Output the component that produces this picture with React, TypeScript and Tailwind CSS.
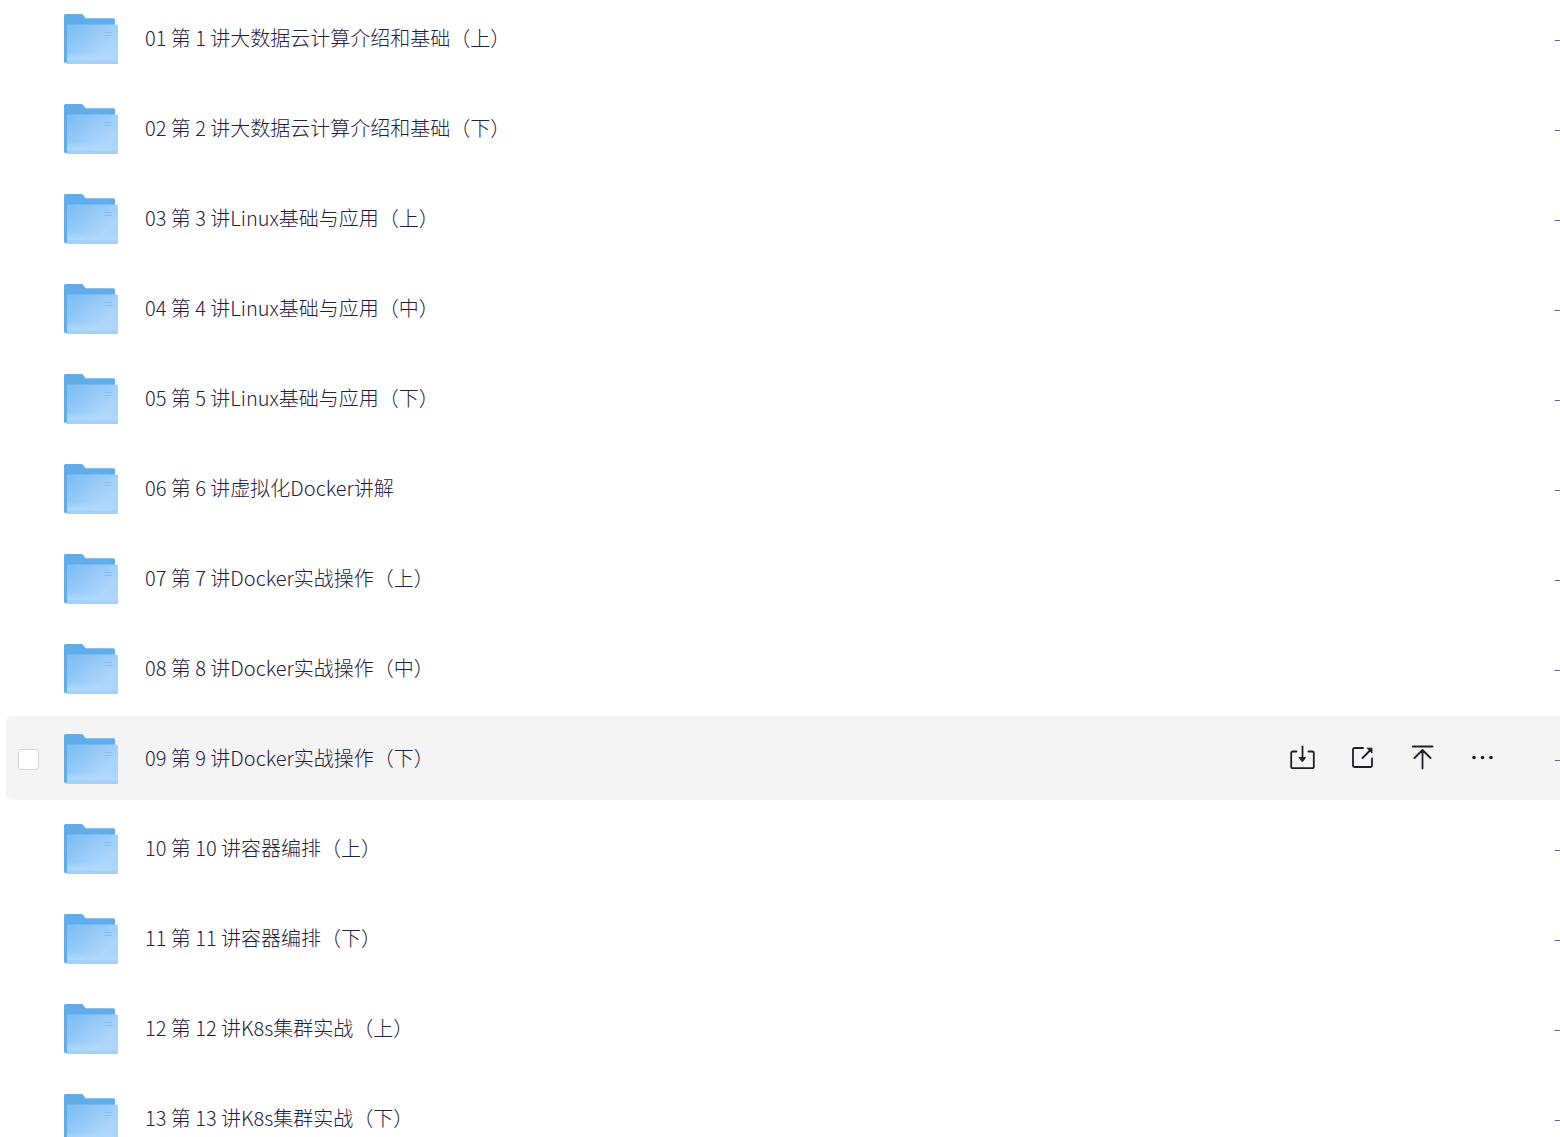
import { ReactNode } from "react";

const lessons = [
  "01 第 1 讲大数据云计算介绍和基础（上）",
  "02 第 2 讲大数据云计算介绍和基础（下）",
  "03 第 3 讲Linux基础与应用（上）",
  "04 第 4 讲Linux基础与应用（中）",
  "05 第 5 讲Linux基础与应用（下）",
  "06 第 6 讲虚拟化Docker讲解",
  "07 第 7 讲Docker实战操作（上）",
  "08 第 8 讲Docker实战操作（中）",
  "09 第 9 讲Docker实战操作（下）",
  "10 第 10 讲容器编排（上）",
  "11 第 11 讲容器编排（下）",
  "12 第 12 讲K8s集群实战（上）",
  "13 第 13 讲K8s集群实战（下）",
];

const activeIndex = 8;

const FolderIcon = () => (
  <svg className="h-[50px] w-[54px] shrink-0" viewBox="0 0 54 50" aria-hidden="true">
    <path
      d="M1.5 0H17.2c.8 0 1.5.3 2 1L21.6 4.3H49.5A1.5 1.5 0 0 1 51 5.8V49H1.5A1.5 1.5 0 0 1 0 47.5V1.5A1.5 1.5 0 0 1 1.5 0Z"
      fill="#61adeb"
    />
    <path
      d="M4 10.5H52.5A1.5 1.5 0 0 1 54 12V48.5A1.5 1.5 0 0 1 52.5 50H2.5C3 49.5 3 49 3 48.5V11.5A1 1 0 0 1 4 10.5Z"
      fill="url(#folderFront)"
    />
    <path d="M3 38H54V46.5H3Z" fill="url(#folderGlow)" />
    <path d="M3 46.5H54V48.5A1.5 1.5 0 0 1 52.5 50H2.5C3 49.5 3 49 3 48.5Z" fill="#a3d2f9" />
    <path d="M40.5 18.5H48M40.5 21.5H48" stroke="#84bff3" strokeWidth="1" />
  </svg>
);

// Gradients are shared by every folder on the page
const FolderGradients = () => (
  <svg className="absolute size-0" aria-hidden="true">
    <defs>
      <linearGradient id="folderFront" x1="0.1" y1="0.1" x2="0.9" y2="0.8">
        <stop offset="0" stopColor="#81bff3" />
        <stop offset="0.8" stopColor="#abd5fb" />
        <stop offset="1" stopColor="#abd5fb" />
      </linearGradient>
      <linearGradient id="folderGlow" x1="0" y1="0" x2="0" y2="1">
        <stop offset="0" stopColor="#b4dafd" stopOpacity="0" />
        <stop offset="1" stopColor="#b4dafd" stopOpacity="0.9" />
      </linearGradient>
    </defs>
  </svg>
);

const ActionButton = ({ label, children }: { label: string; children: ReactNode }) => (
  <button type="button" aria-label={label} className="size-[30px] cursor-pointer">
    <svg
      className="size-[30px]"
      viewBox="0 0 30 30"
      fill="none"
      stroke="#1f2026"
      strokeWidth="1.8"
      strokeLinecap="round"
      strokeLinejoin="round"
    >
      {children}
    </svg>
  </button>
);

const RowActions = () => (
  <div className="flex shrink-0 gap-[30px]">
    <ActionButton label="下载">
      <path d="M8.5 7.5H4.7A1.5 1.5 0 0 0 3.2 9V22.7A1.5 1.5 0 0 0 4.7 24.2H24.3A1.5 1.5 0 0 0 25.8 22.7V9A1.5 1.5 0 0 0 24.3 7.5H20.5" />
      <path d="M14.5 2.5V14" />
      <path d="M11.4 13.5H17.6L14.5 17.6Z" fill="#1f2026" strokeWidth="1" />
    </ActionButton>
    <ActionButton label="分享">
      <path d="M15 4H6.5A1.5 1.5 0 0 0 5 5.500V21.5A1.5 1.5 0 0 0 6.5 23H22.500A1.5 1.5 0 0 0 24 21.5V14.5" />
      <path d="M14.5 14L22 6.5" />
      <path d="M19.5 4.200H24V8.700Z" fill="#1f2026" strokeWidth="1" />
    </ActionButton>
    <ActionButton label="置顶">
      <path d="M4.800 2.500H24.500M14.500 6.500V24.500M6.500 14L14.500 6L22.500 14" />
    </ActionButton>
    <ActionButton label="更多">
      <g fill="#1f2026" stroke="none">
        <circle cx="6" cy="13.500" r="1.800" />
        <circle cx="14.500" cy="13.500" r="1.800" />
        <circle cx="23" cy="13.500" r="1.800" />
      </g>
    </ActionButton>
  </div>
);

const App = () => {
  return (
    <main className="h-screen overflow-hidden bg-white font-['Noto_Sans_CJK_SC',sans-serif] font-light text-[#1f2040]">
      <FolderGradients />

      <ul className="-mt-1 flex flex-col gap-1.5 pl-1.5">
        {lessons.map((name, index) => {
          const active = index === activeIndex;

          return (
            <li
              key={name}
              className={`flex h-[84px] items-center rounded-l-md pt-0.5 pl-3 ${
                active ? "bg-[#f4f4f4]" : ""
              }`}
            >
              <input
                type="checkbox"
                aria-label={name}
                className={`mr-[25px] size-[21px] shrink-0 appearance-none rounded-[3px] border border-[#d6d6d6] bg-white ${
                  active ? "" : "invisible"
                }`}
              />
              <FolderIcon />
              <a href="#" className="ml-[27px] min-w-0 flex-1 truncate pb-0.5 text-xl">
                {name}
              </a>
              {active && <RowActions />}
              <span className="ml-14 w-1.5 shrink-0 pb-0.5 text-xl text-[#62637d]">-</span>
            </li>
          );
        })}
      </ul>
    </main>
  );
};

export default App;
